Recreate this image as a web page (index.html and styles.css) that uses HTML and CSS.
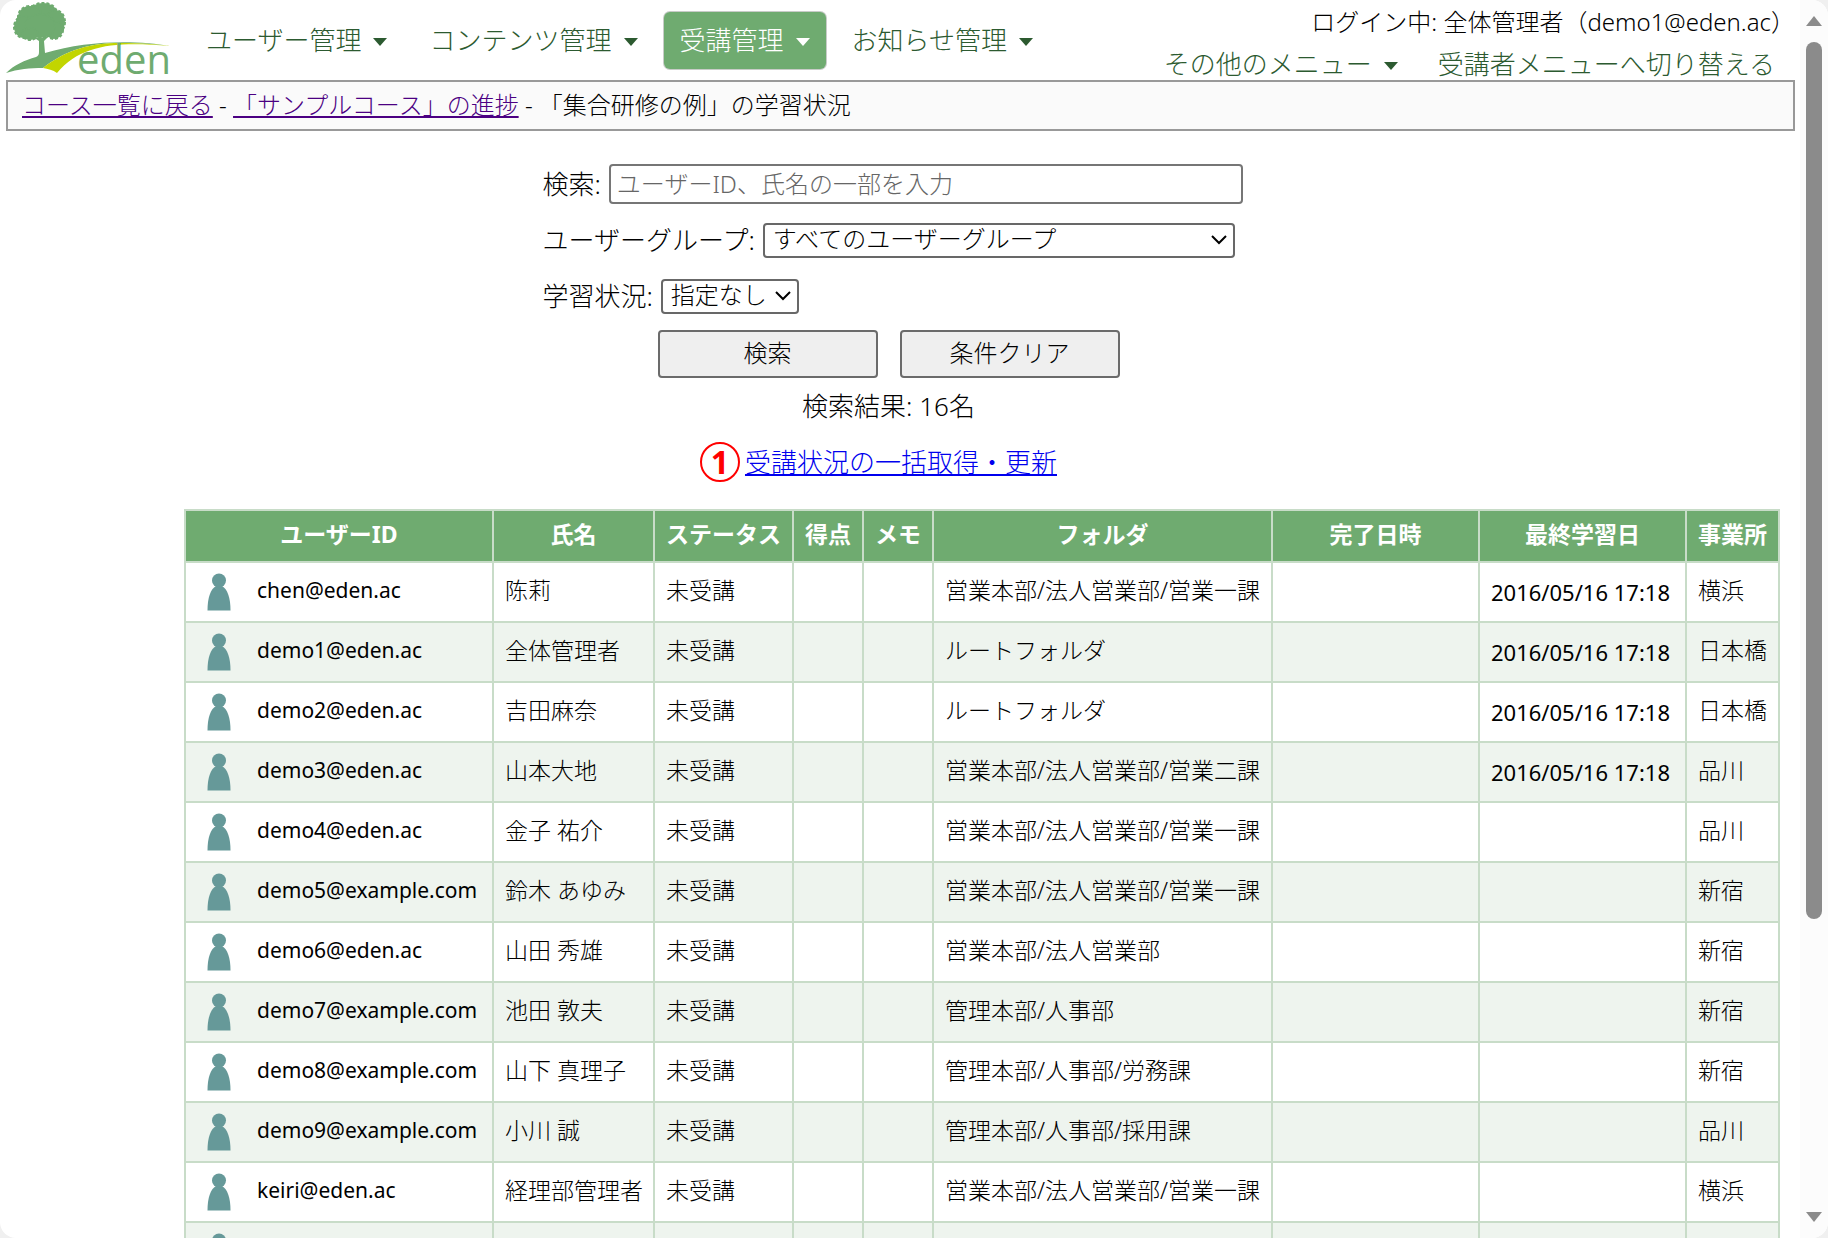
FILE: index.html
```html
<!DOCTYPE html>
<html lang="ja">
<head>
<meta charset="utf-8">
<title>「集合研修の例」の学習状況</title>
<link rel="stylesheet" href="styles.css">
</head>
<body>
<svg class="defs" aria-hidden="true">
  <symbol id="person" viewBox="0 0 24 38"><circle cx="12" cy="7.5" r="7"/><path d="M9 13h6c5.500 3 8.500 12 8.500 24.500H.5C.5 25 3.500 16 9 13z"/></symbol>
</svg>
<div class="window">
<div class="page">
  <header class="header">
    <a class="logo" href="#" aria-label="eden">
      <svg viewBox="0 0 172 80" width="172" height="80">
        <g fill="#6fab70">
          <g stroke="#6fab70" stroke-width="2" stroke-dasharray="3 2">
            <ellipse cx="43" cy="13" rx="14" ry="10"/><ellipse cx="30" cy="17" rx="12" ry="11"/><ellipse cx="24" cy="27" rx="10" ry="11"/><ellipse cx="55" cy="22" rx="10" ry="12"/><ellipse cx="54" cy="30" rx="9" ry="9"/><ellipse cx="40" cy="26" rx="15" ry="12"/><ellipse cx="30" cy="34" rx="8" ry="6"/>
          </g>
          <path d="M33 37l6 4v11c0 3-1 4-3 5C25 60 14 65 6 73c12-4 24-5 37-5 24-19 49-25 76-25 20 0 36 1 51 3-32-6-84-6-125 7l-1-12 5-5-6 2-5 0z"/>
        </g>
        <path fill="#c2d500" d="M43 68c24-19 49-25 76-25 20 0 36 1 51 3-51-4-88-3-113 27-4-3-9-4-14-5z"/>
        <text x="77" y="74" class="logo-text">eden</text>
      </svg>
    </a>
    <nav class="nav">
      <button class="menu">ユーザー管理<i class="caret"></i></button>
      <button class="menu">コンテンツ管理<i class="caret"></i></button>
      <button class="menu active">受講管理<i class="caret"></i></button>
      <button class="menu">お知らせ管理<i class="caret"></i></button>
    </nav>
    <div class="account">
      <div class="login">ログイン中: 全体管理者（demo1@eden.ac）</div>
      <div class="links"><button class="sub">その他のメニュー<i class="caret"></i></button><a class="sub" href="#">受講者メニューへ切り替える</a></div>
    </div>
  </header>
  <div class="crumbs"><a href="#">コース一覧に戻る</a> - <a href="#">「サンプルコース」の進捗</a> - 「集合研修の例」の学習状況</div>
  <main>
    <form class="search">
      <div class="field"><label for="q">検索:</label><input id="q" type="text" placeholder="ユーザーID、氏名の一部を入力"></div>
      <div class="field"><label for="group">ユーザーグループ:</label><select id="group" class="group"><option>すべてのユーザーグループ</option></select></div>
      <div class="field"><label for="status">学習状況:</label><select id="status" class="status"><option>指定なし</option></select></div>
      <div class="buttons"><button type="button">検索</button><button type="button">条件クリア</button></div>
    </form>
    <p class="result">検索結果: 16名</p>
    <p class="bulk"><span class="badge">1</span><a href="#">受講状況の一括取得・更新</a></p>
    <div class="list">
    <table>
      <colgroup><col class="c-id"><col class="c-name"><col class="c-status"><col class="c-small"><col class="c-small"><col><col class="c-date"><col class="c-date"><col class="c-office"></colgroup>
      <thead><tr><th>ユーザーID</th><th>氏名</th><th>ステータス</th><th>得点</th><th>メモ</th><th>フォルダ</th><th>完了日時</th><th>最終学習日</th><th>事業所</th></tr></thead>
      <tbody>
        <tr><td><svg class="person"><use href="#person"/></svg>chen@eden.ac</td><td>陈莉</td><td>未受講</td><td></td><td></td><td>営業本部/法人営業部/営業一課</td><td></td><td class="date">2016/05/16 17:18</td><td>横浜</td></tr>
        <tr><td><svg class="person"><use href="#person"/></svg>demo1@eden.ac</td><td>全体管理者</td><td>未受講</td><td></td><td></td><td>ルートフォルダ</td><td></td><td class="date">2016/05/16 17:18</td><td>日本橋</td></tr>
        <tr><td><svg class="person"><use href="#person"/></svg>demo2@eden.ac</td><td>吉田麻奈</td><td>未受講</td><td></td><td></td><td>ルートフォルダ</td><td></td><td class="date">2016/05/16 17:18</td><td>日本橋</td></tr>
        <tr><td><svg class="person"><use href="#person"/></svg>demo3@eden.ac</td><td>山本大地</td><td>未受講</td><td></td><td></td><td>営業本部/法人営業部/営業二課</td><td></td><td class="date">2016/05/16 17:18</td><td>品川</td></tr>
        <tr><td><svg class="person"><use href="#person"/></svg>demo4@eden.ac</td><td>金子 祐介</td><td>未受講</td><td></td><td></td><td>営業本部/法人営業部/営業一課</td><td></td><td></td><td>品川</td></tr>
        <tr><td><svg class="person"><use href="#person"/></svg>demo5@example.com</td><td>鈴木 あゆみ</td><td>未受講</td><td></td><td></td><td>営業本部/法人営業部/営業一課</td><td></td><td></td><td>新宿</td></tr>
        <tr><td><svg class="person"><use href="#person"/></svg>demo6@eden.ac</td><td>山田 秀雄</td><td>未受講</td><td></td><td></td><td>営業本部/法人営業部</td><td></td><td></td><td>新宿</td></tr>
        <tr><td><svg class="person"><use href="#person"/></svg>demo7@example.com</td><td>池田 敦夫</td><td>未受講</td><td></td><td></td><td>管理本部/人事部</td><td></td><td></td><td>新宿</td></tr>
        <tr><td><svg class="person"><use href="#person"/></svg>demo8@example.com</td><td>山下 真理子</td><td>未受講</td><td></td><td></td><td>管理本部/人事部/労務課</td><td></td><td></td><td>新宿</td></tr>
        <tr><td><svg class="person"><use href="#person"/></svg>demo9@example.com</td><td>小川 誠</td><td>未受講</td><td></td><td></td><td>管理本部/人事部/採用課</td><td></td><td></td><td>品川</td></tr>
        <tr><td><svg class="person"><use href="#person"/></svg>keiri@eden.ac</td><td>経理部管理者</td><td>未受講</td><td></td><td></td><td>営業本部/法人営業部/営業一課</td><td></td><td></td><td>横浜</td></tr>
        <tr><td><svg class="person"><use href="#person"/></svg></td><td></td><td></td><td></td><td></td><td></td><td></td><td></td><td></td></tr>
      </tbody>
    </table>
    </div>
  </main>
</div>
<div class="scrollbar" aria-hidden="true">
  <svg width="16" height="10"><path d="M8 0l8 10H0z"/></svg>
  <div class="track"><div class="thumb"></div></div>
  <svg width="16" height="10"><path d="M8 10l8-10H0z"/></svg>
</div>
</div>
</body>
</html>
```
FILE: styles.css
```css
* { box-sizing: border-box; }
body { margin: 0; background: #f0f0f0; color: #000; font: 300 26px/32px "Noto Sans", "Noto Sans CJK JP", sans-serif; }
button, input, select { font: inherit; color: inherit; }
p { margin: 0; }
.defs { display: none; }
.window { display: flex; height: 100vh; overflow: hidden; background: #fff; border-radius: 16px; }
.page { flex: 1; min-width: 0; }

.header { display: flex; height: 80px; }
.logo { flex: none; height: 80px; margin-right: 18px; }
.logo svg { display: block; overflow: visible; }
.logo-text { font: 400 40px "Open Sans", sans-serif; fill: #6fab70; }
.nav { display: flex; align-items: flex-start; gap: 10px; padding-top: 12px; }
.menu, .sub { border: 0; background: none; color: #2c5a30; white-space: nowrap; text-decoration: none; padding: 0; }
.menu { height: 57px; padding: 0 16px 2px; border-radius: 6px; }
.menu.active { background: #6fab70; color: #fff; box-shadow: 0 0 0 1px #c8ccc8; }
.caret { display: inline-block; margin-left: 12px; vertical-align: 4px; border: 7px solid transparent; border-top: 8px solid; border-bottom: 0; }
.account { margin-left: auto; padding: 6px 5px 0 0; text-align: right; white-space: nowrap; }
.login { font-size: 24px; }
.links { display: flex; justify-content: flex-end; gap: 40px; padding: 10px 20px 0 0; }
.crumbs { height: 51px; margin: 0 5px 0 6px; padding: 7px 14px; border: 2px solid #999; background: #fafafa; font-size: 24px; white-space: nowrap; }
.crumbs a { color: #4b0082; }

main { padding: 25px 23px 0 0; }
.search { width: 692px; margin: 0 auto; }
.field { display: flex; align-items: center; height: 56px; gap: 8px; white-space: nowrap; }
.field input { flex: none; width: 634px; height: 40px; padding: 0 6px 2px; border: 2px solid #767676; border-radius: 4px; font-size: 24px; }
.field input::placeholder { color: #666; opacity: 1; }
.field select { height: 35px; padding: 0 8px 2px; border: 2px solid #686868; border-radius: 4px; font-size: 24px; line-height: 28px; appearance: none; background: #fff url("data:image/svg+xml,%3Csvg xmlns='http://www.w3.org/2000/svg' width='16' height='10'%3E%3Cpath d='M1 1l7 7 7-7' fill='none' stroke='%23000' stroke-width='2'/%3E%3C/svg%3E") no-repeat right 6px center; }
.group { width: 474px; }
.status { width: 138px; }
.buttons { display: flex; justify-content: center; gap: 22px; padding-top: 6px; }
.buttons button { width: 220px; height: 48px; padding-bottom: 4px; border: 2px solid #6b6b6b; border-radius: 4px; background: #efefef; font-size: 24px; }
.result { padding-top: 12px; text-align: center; }
.bulk { display: flex; align-items: center; justify-content: center; gap: 5px; height: 40px; margin: 20px 20px 27px 0; }
.bulk a { color: #00e; }
.badge { width: 40px; height: 40px; border: 2px solid #f00; border-radius: 50%; color: #f00; font-size: 32px; font-weight: 700; line-height: 36px; text-align: center; }

.list { padding-left: 184px; margin-right: -3px; }
table { width: 100%; table-layout: fixed; border-collapse: collapse; font-size: 23px; }
th, td { height: 60px; padding: 0 10px 4px 11px; border: 2px solid #c8dcc8; text-align: left; white-space: nowrap; }
th { height: 52px; padding: 0 0 4px; background: #6fab70; color: #fff; font-weight: 700; text-align: center; }
tbody tr:nth-child(even) { background: #eef4ee; }
.c-id { width: 308px; }
.c-name { width: 161px; }
.c-status { width: 139px; }
.c-small { width: 70px; }
.c-date { width: 207px; }
.c-office { width: 93px; }
td:first-child { padding: 0 0 0 21px; font-size: 21px; font-weight: 400; }
.date { padding-bottom: 0; font-size: 22px; font-weight: 400; }
.person { width: 24px; height: 38px; margin-right: 26px; vertical-align: middle; fill: #669999; }

.scrollbar { flex: none; width: 28px; display: flex; flex-direction: column; align-items: center; padding: 16px 0; gap: 16px; background: #fcfcfc; fill: #8b8b8b; }
.track { flex: 1; }
.thumb { width: 16px; height: 76%; border-radius: 8px; background: #8b8b8b; }
```
